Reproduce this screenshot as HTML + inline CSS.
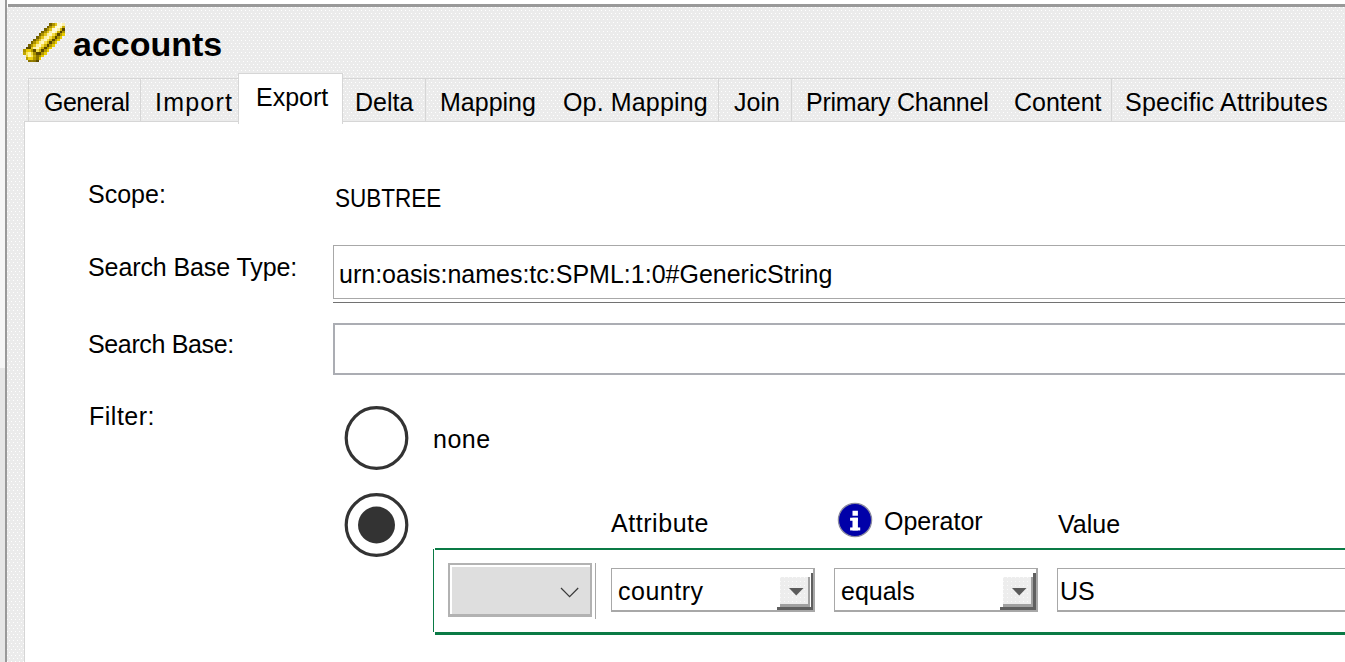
<!DOCTYPE html>
<html><head><meta charset="utf-8">
<style>
*{margin:0;padding:0;box-sizing:border-box}
html,body{width:1345px;height:662px;overflow:hidden;background:#fff}
body{position:relative;font-family:"Liberation Sans",sans-serif;color:#000}
.a{position:absolute}
.t{position:absolute;white-space:nowrap;line-height:1;font-size:25px}
.dots2{background-color:#ededed;background-image:conic-gradient(from 270deg at 1px 1px,#fafafa 90deg,transparent 0);background-size:4px 4px}
.dots{background-color:#ebebeb;background-image:conic-gradient(from 270deg at 1px 1px,#ffffff 90deg,transparent 0),conic-gradient(from 270deg at 1px 1px,#ffffff 90deg,transparent 0);background-size:4px 6px,4px 6px;background-position:0 0,2px 3px}
</style></head><body>
<!-- left strip -->
<div class="a" style="left:0;top:0;width:5px;height:368px;background:#f6f6f6"></div>
<div class="a" style="left:0;top:368px;width:5px;height:294px;background:#e6e6e6"></div>
<div class="a" style="left:5px;top:0;width:2px;height:662px;background:#999"></div>
<!-- top line -->
<div class="a" style="left:8px;top:4px;width:1337px;height:3px;background:#999"></div>
<!-- panel bg -->
<div class="a dots" style="left:7px;top:7px;width:1338px;height:655px"></div>

<!-- icon -->
<svg class="a" style="left:23px;top:23px" width="42" height="42" viewBox="0 0 42 42" shape-rendering="crispEdges"><rect x="26" y="0" width="3" height="3" fill="#746100"/><rect x="29" y="0" width="3" height="3" fill="#ae9200"/><rect x="32" y="0" width="2" height="3" fill="#e3c518"/><rect x="34" y="0" width="3" height="3" fill="#fcf7d0"/><rect x="37" y="0" width="2" height="3" fill="#fffbde"/><rect x="39" y="0" width="3" height="3" fill="#fbf0a7"/><rect x="24" y="3" width="2" height="2" fill="#746100"/><rect x="26" y="3" width="3" height="2" fill="#ae9200"/><rect x="29" y="3" width="3" height="2" fill="#e3c518"/><rect x="32" y="3" width="2" height="2" fill="#fcf7d0"/><rect x="34" y="3" width="3" height="2" fill="#fffbde"/><rect x="37" y="3" width="2" height="2" fill="#fbf0a7"/><rect x="39" y="3" width="3" height="2" fill="#ccae03"/><rect x="21" y="5" width="3" height="3" fill="#746100"/><rect x="24" y="5" width="2" height="3" fill="#ae9200"/><rect x="26" y="5" width="3" height="3" fill="#e3c518"/><rect x="29" y="5" width="3" height="3" fill="#fcf7d0"/><rect x="32" y="5" width="2" height="3" fill="#fffbde"/><rect x="34" y="5" width="3" height="3" fill="#fbf0a7"/><rect x="37" y="5" width="2" height="3" fill="#ccae03"/><rect x="39" y="5" width="3" height="3" fill="#5a4800"/><rect x="18" y="8" width="3" height="2" fill="#746100"/><rect x="21" y="8" width="3" height="2" fill="#ae9200"/><rect x="24" y="8" width="2" height="2" fill="#e3c518"/><rect x="26" y="8" width="3" height="2" fill="#f9eda3"/><rect x="29" y="8" width="3" height="2" fill="#fffbde"/><rect x="32" y="8" width="2" height="2" fill="#fbf0a7"/><rect x="34" y="8" width="3" height="2" fill="#ccae03"/><rect x="37" y="8" width="2" height="2" fill="#5a4800"/><rect x="39" y="8" width="3" height="2" fill="#b09700"/><rect x="16" y="10" width="2" height="3" fill="#746100"/><rect x="18" y="10" width="3" height="3" fill="#ae9200"/><rect x="21" y="10" width="3" height="3" fill="#e3c518"/><rect x="24" y="10" width="2" height="3" fill="#f9eda3"/><rect x="26" y="10" width="3" height="3" fill="#fff7c2"/><rect x="29" y="10" width="3" height="3" fill="#f6dd48"/><rect x="32" y="10" width="2" height="3" fill="#ccae03"/><rect x="34" y="10" width="3" height="3" fill="#5a4800"/><rect x="37" y="10" width="2" height="3" fill="#b09700"/><rect x="39" y="10" width="3" height="3" fill="#e8cc00"/><rect x="13" y="13" width="3" height="3" fill="#746100"/><rect x="16" y="13" width="2" height="3" fill="#ae9200"/><rect x="18" y="13" width="3" height="3" fill="#e3c518"/><rect x="21" y="13" width="3" height="3" fill="#f9eda3"/><rect x="24" y="13" width="2" height="3" fill="#fff7c2"/><rect x="26" y="13" width="3" height="3" fill="#f6dd48"/><rect x="29" y="13" width="3" height="3" fill="#ccae03"/><rect x="32" y="13" width="2" height="3" fill="#5a4800"/><rect x="34" y="13" width="3" height="3" fill="#b09700"/><rect x="37" y="13" width="2" height="3" fill="#e8cc00"/><rect x="10" y="16" width="3" height="2" fill="#746100"/><rect x="13" y="16" width="3" height="2" fill="#ae9200"/><rect x="16" y="16" width="2" height="2" fill="#e3c518"/><rect x="18" y="16" width="3" height="2" fill="#f9eda3"/><rect x="21" y="16" width="3" height="2" fill="#fff7c2"/><rect x="24" y="16" width="2" height="2" fill="#f6dd48"/><rect x="26" y="16" width="3" height="2" fill="#ccae03"/><rect x="29" y="16" width="3" height="2" fill="#5a4800"/><rect x="32" y="16" width="2" height="2" fill="#b09700"/><rect x="34" y="16" width="3" height="2" fill="#e8cc00"/><rect x="8" y="18" width="2" height="3" fill="#746100"/><rect x="10" y="18" width="3" height="3" fill="#ae9200"/><rect x="13" y="18" width="3" height="3" fill="#e3c518"/><rect x="16" y="18" width="2" height="3" fill="#f9eda3"/><rect x="18" y="18" width="3" height="3" fill="#fff7c2"/><rect x="21" y="18" width="3" height="3" fill="#f6dd48"/><rect x="24" y="18" width="2" height="3" fill="#ccae03"/><rect x="26" y="18" width="3" height="3" fill="#5a4800"/><rect x="29" y="18" width="3" height="3" fill="#b09700"/><rect x="32" y="18" width="2" height="3" fill="#e8cc00"/><rect x="5" y="21" width="3" height="3" fill="#746100"/><rect x="8" y="21" width="2" height="3" fill="#ae9200"/><rect x="10" y="21" width="3" height="3" fill="#e3c518"/><rect x="13" y="21" width="3" height="3" fill="#f9eda3"/><rect x="16" y="21" width="2" height="3" fill="#fff7c2"/><rect x="18" y="21" width="3" height="3" fill="#f6dd48"/><rect x="21" y="21" width="3" height="3" fill="#ccae03"/><rect x="24" y="21" width="2" height="3" fill="#5a4800"/><rect x="26" y="21" width="3" height="3" fill="#b09700"/><rect x="29" y="21" width="3" height="3" fill="#e8cc00"/><rect x="3" y="24" width="2" height="2" fill="#5e4c00"/><rect x="5" y="24" width="3" height="2" fill="#5e4c00"/><rect x="8" y="24" width="2" height="2" fill="#e3c518"/><rect x="10" y="24" width="3" height="2" fill="#f9eda3"/><rect x="13" y="24" width="3" height="2" fill="#fff7c2"/><rect x="16" y="24" width="2" height="2" fill="#f6dd48"/><rect x="18" y="24" width="3" height="2" fill="#ccae03"/><rect x="21" y="24" width="3" height="2" fill="#5a4800"/><rect x="24" y="24" width="2" height="2" fill="#b09700"/><rect x="26" y="24" width="3" height="2" fill="#e8cc00"/><rect x="0" y="26" width="3" height="3" fill="#aa9100"/><rect x="3" y="26" width="2" height="3" fill="#e7c700"/><rect x="5" y="26" width="3" height="3" fill="#e9c904"/><rect x="8" y="26" width="2" height="3" fill="#b29800"/><rect x="10" y="26" width="3" height="3" fill="#5e4c00"/><rect x="13" y="26" width="3" height="3" fill="#f6dd48"/><rect x="16" y="26" width="2" height="3" fill="#ccae03"/><rect x="18" y="26" width="3" height="3" fill="#5a4800"/><rect x="21" y="26" width="3" height="3" fill="#b09700"/><rect x="24" y="26" width="2" height="3" fill="#e8cc00"/><rect x="0" y="29" width="3" height="3" fill="#c1a500"/><rect x="3" y="29" width="2" height="3" fill="#f8e557"/><rect x="5" y="29" width="3" height="3" fill="#fff49c"/><rect x="8" y="29" width="2" height="3" fill="#f1d831"/><rect x="10" y="29" width="3" height="3" fill="#a48b00"/><rect x="13" y="29" width="3" height="3" fill="#5e4c00"/><rect x="16" y="29" width="2" height="3" fill="#5a4800"/><rect x="18" y="29" width="3" height="3" fill="#b09700"/><rect x="21" y="29" width="3" height="3" fill="#e8cc00"/><rect x="3" y="32" width="2" height="2" fill="#f2d932"/><rect x="5" y="32" width="3" height="2" fill="#fff5a8"/><rect x="8" y="32" width="2" height="2" fill="#fbe863"/><rect x="10" y="32" width="3" height="2" fill="#c6aa00"/><rect x="13" y="32" width="3" height="2" fill="#8a7400"/><rect x="16" y="32" width="2" height="2" fill="#b09700"/><rect x="18" y="32" width="3" height="2" fill="#e8cc00"/><rect x="3" y="34" width="2" height="3" fill="#b79c00"/><rect x="5" y="34" width="3" height="3" fill="#ebce11"/><rect x="8" y="34" width="2" height="3" fill="#ebcd0f"/><rect x="10" y="34" width="3" height="3" fill="#b49900"/><rect x="13" y="34" width="3" height="3" fill="#8a7400"/><rect x="16" y="34" width="2" height="3" fill="#e8cc00"/><rect x="5" y="37" width="3" height="2" fill="#8a7400"/><rect x="8" y="37" width="2" height="2" fill="#957e00"/><rect x="10" y="37" width="3" height="2" fill="#8a7400"/><rect x="13" y="37" width="3" height="2" fill="#5e4c00"/></svg>
<div class="t" style="left:73px;top:27px;font-size:34px;font-weight:bold">accounts</div>

<!-- tabs strip -->
<div class="a dots" style="left:28px;top:78px;width:1317px;height:43px;border-top:1px solid #d6d6d6;border-left:1px solid #d6d6d6"></div>
<div class="a" style="left:140px;top:78px;width:1px;height:43px;background:#d6d6d6"></div>
<div class="a" style="left:425px;top:78px;width:1px;height:43px;background:#d6d6d6"></div>
<div class="a" style="left:718px;top:78px;width:1px;height:43px;background:#d6d6d6"></div>
<div class="a" style="left:791px;top:78px;width:1px;height:43px;background:#d6d6d6"></div>
<div class="a" style="left:1111px;top:78px;width:1px;height:43px;background:#d6d6d6"></div>

<!-- content panel -->
<div class="a" style="left:24px;top:121px;width:1321px;height:541px;background:#fff;border-top:1px solid #d6d6d6;border-left:1px solid #d6d6d6"></div>
<!-- selected tab -->
<div class="a" style="left:238px;top:73px;width:105px;height:51px;background:#fff;border:1px solid #d6d6d6;border-bottom:none"></div>

<div class="t" style="left:44px;top:90px;letter-spacing:-0.5px">General</div>
<div class="t" style="left:155px;top:90px;letter-spacing:1.2px">Import</div>
<div class="t" style="left:256px;top:85px">Export</div>
<div class="t" style="left:355px;top:90px">Delta</div>
<div class="t" style="left:440px;top:90px">Mapping</div>
<div class="t" style="left:563px;top:90px;letter-spacing:0.15px">Op. Mapping</div>
<div class="t" style="left:734px;top:90px">Join</div>
<div class="t" style="left:806px;top:90px;letter-spacing:-0.25px">Primary Channel</div>
<div class="t" style="left:1014px;top:90px">Content</div>
<div class="t" style="left:1125px;top:90px;letter-spacing:0.22px">Specific Attributes</div>

<!-- form -->
<div class="t" style="left:88px;top:181.5px">Scope:</div>
<div class="t" style="left:335px;top:186.2px;transform:scaleX(0.9);transform-origin:0 0">SUBTREE</div>
<div class="t" style="left:88px;top:254.5px;letter-spacing:-0.1px">Search Base Type:</div>
<div class="a" style="left:333px;top:245px;width:1020px;height:54px;border:1px solid #a8a8a8"></div>
<div class="a" style="left:333px;top:301.5px;width:1012px;height:1.5px;background:#727272"></div>
<div class="t" style="left:339px;top:261.5px">urn:oasis:names:tc:SPML:1:0#GenericString</div>

<div class="t" style="left:88px;top:331.5px;letter-spacing:-0.36px">Search Base:</div>
<div class="a" style="left:333px;top:323px;width:1020px;height:52px;border:2px solid #abadb3"></div>

<div class="t" style="left:89px;top:404px;letter-spacing:0.5px">Filter:</div>
<svg class="a" style="left:340px;top:401px" width="74" height="164" viewBox="0 0 74 164">
  <circle cx="36.5" cy="37" r="30.3" fill="#fff" stroke="#333" stroke-width="3.2"/>
  <circle cx="36.5" cy="124" r="30.3" fill="#fff" stroke="#333" stroke-width="3.2"/>
  <circle cx="36.5" cy="124" r="18.5" fill="#333"/>
</svg>
<div class="t" style="left:433px;top:426.5px;letter-spacing:0.5px">none</div>

<div class="t" style="left:611px;top:511px;letter-spacing:0.55px">Attribute</div>
<svg class="a" style="left:836.5px;top:502.25px" width="36" height="36" viewBox="0 0 36 36">
  <circle cx="18" cy="18" r="16.6" fill="#0000a8" stroke="#8a8aa0" stroke-width="1.3"/>
  <rect x="15.5" y="8.75" width="5.4" height="5" fill="#fff"/>
  <rect x="13.1" y="15.75" width="7.8" height="3" fill="#fff"/>
  <rect x="15.5" y="15.75" width="5.4" height="12.7" fill="#fff"/>
  <rect x="13.1" y="25.45" width="10.1" height="3" fill="#fff"/>
</svg>
<div class="t" style="left:884px;top:509px">Operator</div>
<div class="t" style="left:1058px;top:511.5px">Value</div>

<!-- green box -->
<div class="a" style="left:433px;top:549px;width:1.2px;height:83px;background:#0a7a45"></div>
<div class="a" style="left:434.5px;top:548px;width:911px;height:2px;background:#0a7a45"></div>
<div class="a" style="left:434.5px;top:632px;width:911px;height:3px;background:#0a7a45"></div>

<!-- disabled combo -->
<div class="a" style="left:448px;top:563px;width:144px;height:54px;background:#b2b2b2"></div>
<div class="a" style="left:450px;top:564.5px;width:139.5px;height:49.5px;background:#fff"></div>
<div class="a" style="left:452px;top:567px;width:137.5px;height:47px;background:#dedede"></div>
<svg class="a" style="left:558px;top:584px" width="24" height="16" viewBox="0 0 24 16"><polyline points="3,4 11.6,12.6 20.2,4" fill="none" stroke="#3a3a3a" stroke-width="1.25"/></svg>
<div class="a" style="left:594.5px;top:563px;width:1.5px;height:56px;background:#a8a8a8"></div>

<!-- country combo -->
<div class="a" style="left:611px;top:568px;width:204px;height:43.5px;border:1.5px solid #a8a8a8;border-right-width:2px;border-bottom-width:2.5px;background:#fff"></div>
<div class="a" style="left:777px;top:573px;width:36px;height:37px;background:#5f5f5f"></div>
<div class="a" style="left:777px;top:573px;width:33.5px;height:34px;background:#fff"></div>
<div class="a" style="left:780px;top:577px;width:30px;height:30px;background:#a0a0a0"></div>
<div class="a dots2" style="left:780px;top:577px;width:28px;height:27px"></div>
<svg class="a" style="left:789px;top:588px" width="15" height="8" viewBox="0 0 15 8"><polygon points="0,0 14.5,0 7.25,7.5" fill="#5a5a5a"/></svg>
<div class="t" style="left:618px;top:579.3px;letter-spacing:0.5px">country</div>

<!-- equals combo -->
<div class="a" style="left:834px;top:568px;width:204px;height:43.5px;border:1.5px solid #a8a8a8;border-right-width:2px;border-bottom-width:2.5px;background:#fff"></div>
<div class="a" style="left:999.5px;top:573px;width:36px;height:37px;background:#5f5f5f"></div>
<div class="a" style="left:999.5px;top:573px;width:33.5px;height:34px;background:#fff"></div>
<div class="a" style="left:1002.5px;top:577px;width:30px;height:30px;background:#a0a0a0"></div>
<div class="a dots2" style="left:1002.5px;top:577px;width:28px;height:27px"></div>
<svg class="a" style="left:1011.5px;top:588px" width="15" height="8" viewBox="0 0 15 8"><polygon points="0,0 14.5,0 7.25,7.5" fill="#5a5a5a"/></svg>
<div class="t" style="left:841px;top:579px">equals</div>

<!-- value -->
<div class="a" style="left:1057px;top:568px;width:300px;height:43.5px;border:1.5px solid #a8a8a8;border-bottom-width:2.5px;background:#fff"></div>
<div class="t" style="left:1060px;top:578.5px">US</div>
</body></html>
